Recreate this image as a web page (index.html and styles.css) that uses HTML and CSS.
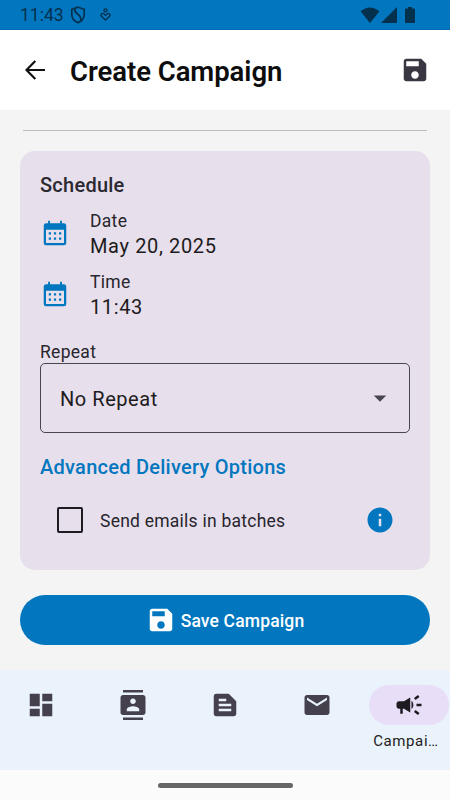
FILE: index.html
```html
<!DOCTYPE html>
<html lang="en">
<head>
<meta charset="utf-8">
<title>Create Campaign</title>
<link rel="stylesheet" href="styles.css">
</head>
<body>
<div class="screen">
  <div class="status">
    <span class="clock">11:43</span>
    <svg class="shield" viewBox="0 0 16 18" fill="none" stroke="currentColor" stroke-width="1.7"><path d="M8 1.200 14.200 3.300V8.500C14.200 12.300 11.600 15.300 8 16.600 4.400 15.300 1.800 12.300 1.800 8.500V3.300Z"/><path d="M4.800 2.800C4.300 10 11.500 6.500 10.800 14.500"/></svg>
    <svg class="heart" viewBox="0 0 11 13" fill="none" stroke="currentColor" stroke-width="1.300"><circle cx="5.500" cy="2.300" r="1.500"/><path d="M5.500 12 1.400 8.300C.3 6.900 1.700 4.900 3.500 5.500L5.500 7.300 7.500 5.500C9.300 4.900 10.700 6.900 9.600 8.300Z"/></svg>
    <span class="spacer"></span>
    <svg class="wifi" viewBox="0 0 20 16"><path fill="currentColor" d="M10 16 .5 4.300Q10-3.500 19.500 4.300Z"/></svg>
    <svg class="signal" viewBox="0 0 16 16"><path fill="currentColor" d="M0 16H16V0Z"/></svg>
    <svg class="battery" viewBox="0 0 10 16"><path fill="currentColor" d="M3 0H7V1.600H9Q10 1.600 10 2.600V15Q10 16 9 16H1Q0 16 0 15V2.600Q0 1.600 1 1.600H3Z"/></svg>
  </div>

  <header class="appbar">
    <svg class="back" viewBox="0 0 20 20" fill="none" stroke="currentColor" stroke-width="2.200"><path d="M10.300 1 1.500 10 10.300 19M1.500 10H20"/></svg>
    <h1>Create Campaign</h1>
    <svg class="icon save" viewBox="0 0 24 24"><path fill="currentColor" d="M17 3H5c-1.110 0-2 .9-2 2v14c0 1.100.89 2 2 2h14c1.100 0 2-.9 2-2V7l-4-4zm-5 16c-1.660 0-3-1.340-3-3s1.340-3 3-3 3 1.340 3 3-1.340 3-3 3zm3-10H5V5h10v4z"/></svg>
  </header>

  <main>
    <div class="divider"></div>
    <section class="card">
      <h2>Schedule</h2>
      <div class="row">
        <svg class="icon" viewBox="0 0 24 24"><path fill="currentColor" fill-rule="evenodd" d="M5 4.200H6.500V2.200H8V4.200H16V2.200H17.500V4.200H19Q21 4.200 21 6V20Q21 21.800 19.200 21.800H4.800Q3 21.800 3 20V6Q3 4.200 5 4.200ZM4.800 9.300V20H19.200V9.300ZM7 11.400H8.800V13.200H7ZM11.100 11.400H12.900V13.200H11.100ZM15.200 11.400H17V13.200H15.200ZM7 15.500H8.800V17.300H7ZM11.100 15.500H12.900V17.300H11.100ZM15.200 15.500H17V17.300H15.200Z"/></svg>
        <div><div class="label">Date</div><div class="value">May 20, 2025</div></div>
      </div>
      <div class="row">
        <svg class="icon" viewBox="0 0 24 24"><path fill="currentColor" fill-rule="evenodd" d="M5 4.200H6.500V2.200H8V4.200H16V2.200H17.500V4.200H19Q21 4.200 21 6V20Q21 21.800 19.200 21.800H4.800Q3 21.800 3 20V6Q3 4.200 5 4.200ZM4.800 9.300V20H19.200V9.300ZM7 11.400H8.800V13.200H7ZM11.100 11.400H12.900V13.200H11.100ZM15.200 11.400H17V13.200H15.200ZM7 15.500H8.800V17.300H7ZM11.100 15.500H12.900V17.300H11.100ZM15.200 15.500H17V17.300H15.200Z"/></svg>
        <div><div class="label">Time</div><div class="value">11:43</div></div>
      </div>
      <div class="label repeat">Repeat</div>
      <div class="select"><span>No Repeat</span><svg class="icon" viewBox="0 0 24 24"><path fill="currentColor" d="m7 10 5 5 5-5z"/></svg></div>
      <h3>Advanced Delivery Options</h3>
      <div class="option">
        <span class="box"></span>
        <span class="label">Send emails in batches</span>
        <svg class="icon info" viewBox="0 0 24 24"><path fill="currentColor" d="M12 2C6.480 2 2 6.480 2 12s4.480 10 10 10 10-4.480 10-10S17.520 2 12 2zm1 15h-2v-6h2v6zm0-8h-2V7h2v2z"/></svg>
      </div>
    </section>
    <div class="button">
      <svg class="icon" viewBox="0 0 24 24"><path fill="currentColor" d="M17 3H5c-1.110 0-2 .9-2 2v14c0 1.100.89 2 2 2h14c1.100 0 2-.9 2-2V7l-4-4zm-5 16c-1.660 0-3-1.340-3-3s1.340-3 3-3 3 1.340 3 3-1.340 3-3 3zm3-10H5V5h10v4z"/></svg>
      <span>Save Campaign</span>
    </div>
  </main>

  <nav>
    <div class="item"><div class="pill"><svg class="icon" viewBox="0 0 24 24"><path fill="currentColor" d="M3 13h8V3H3v10zm0 8h8v-6H3v6zm10 0h8V11h-8v10zm0-18v6h8V3h-8z"/></svg></div></div>
    <div class="item"><div class="pill"><svg class="icon" viewBox="0 0 24 24"><path fill="currentColor" d="M20 0H4v2h16V0zM4 24h16v-2H4v2zM20 4H4c-1.100 0-2 .9-2 2v12c0 1.100.9 2 2 2h16c1.100 0 2-.9 2-2V6c0-1.100-.9-2-2-2zm-8 2.750c1.240 0 2.250 1.010 2.250 2.250s-1.010 2.250-2.250 2.250S9.750 10.240 9.750 9 10.760 6.750 12 6.750zM17 17H7v-1.500c0-1.670 3.330-2.500 5-2.500s5 .83 5 2.500V17z"/></svg></div></div>
    <div class="item"><div class="pill"><svg class="icon" viewBox="0 0 24 24"><path fill="currentColor" fill-rule="evenodd" d="M15 3H5c-1.100 0-2 .9-2 2v14c0 1.100.9 2 2 2h14c1.100 0 2-.9 2-2V9l-6-6zM7 7h6v2H7zm0 4h10v2H7zm0 4h10v2H7z"/></svg></div></div>
    <div class="item"><div class="pill"><svg class="icon" viewBox="0 0 24 24"><path fill="currentColor" d="M20 4H4c-1.100 0-1.990.9-1.990 2L2 18c0 1.100.9 2 2 2h16c1.100 0 2-.9 2-2V6c0-1.100-.9-2-2-2zm0 4-8 5-8-5V6l8 5 8-5v2z"/></svg></div></div>
    <div class="item active"><div class="pill"><svg class="icon" viewBox="0 0 24 24"><path fill="currentColor" d="M18 11v2h4v-2h-4zM16 17.610c.96.71 2.210 1.650 3.200 2.390.4-.53.8-1.070 1.200-1.600-.99-.74-2.240-1.680-3.200-2.400-.4.54-.8 1.080-1.200 1.610zM20.400 5.600c-.4-.53-.8-1.070-1.200-1.600-.99.74-2.240 1.680-3.200 2.400.4.530.8 1.070 1.200 1.600.96-.72 2.210-1.650 3.200-2.400zM4 9c-1.100 0-2 .9-2 2v2c0 1.100.9 2 2 2h1v4h2v-4h1l5 3V6L8 9H4zm11.500 3c0-1.330-.58-2.530-1.500-3.350v6.690c.92-.81 1.500-2.010 1.500-3.340z"/></svg></div><div class="caption">Campai…</div></div>
  </nav>
  <div class="gesture"><div class="handle"></div></div>
</div>
</body>
</html>
```

FILE: styles.css
```css
* { box-sizing: border-box; margin: 0; padding: 0; }
body { font-family: Roboto, "Liberation Sans", sans-serif; color: #1d1b20; }
svg { display: block; flex: none; }
.screen { width: 450px; height: 800px; display: flex; flex-direction: column; background: #f4f4f4; overflow: hidden; }
.icon { width: 30px; height: 30px; }

.status { height: 30px; flex: none; background: #0277bf; color: #03304c; display: flex; align-items: center; padding: 0 34px 0 20px; border-bottom: 1px solid #0868b8; }
.clock { font-size: 17.5px; letter-spacing: 0; width: 50px; white-space: nowrap; }
.shield { width: 16px; height: 18px; }
.heart { width: 11px; height: 13px; margin-left: 14px; }
.spacer { flex: 1; }
.wifi { width: 20px; height: 16px; margin-right: 1px; }
.signal { width: 16px; height: 16px; }
.battery { width: 10px; height: 16px; margin: 0 1px 0 8px; }

.appbar { height: 80px; flex: none; background: #fff; display: flex; align-items: center; padding: 0 20px 0 25px; }
.back { width: 20px; height: 20px; color: #111; }
h1 { flex: 1; margin-left: 25px; font-size: 27.5px; font-weight: 600; letter-spacing: -.05px; line-height: 40px; color: #0d0d0d; padding-top: 3px; }
.save { color: #3a3742; }

main { flex: 1; padding: 20px 20px 25px; display: flex; flex-direction: column; }
.divider { height: 1px; margin: 0 3px 20px; background: #bdbdbd; }
.card { height: 419px; border-radius: 15px; background: #e7dfec; padding: 19px 20px; }
h2 { font-size: 20px; font-weight: 500; line-height: 30px; letter-spacing: .25px; color: #2b2830; }
.row { height: 50px; display: flex; align-items: center; gap: 20px; margin-top: 8px; }
.row + .row { margin-top: 11px; }
.row > div { padding-top: 2px; }
.row .icon, .info { color: #0277bf; }
.label { font-size: 17.5px; line-height: 25px; letter-spacing: .3px; white-space: nowrap; color: #28252c; }
.value { font-size: 20px; line-height: 25px; letter-spacing: .63px; white-space: nowrap; }
.repeat { margin-top: 21px; line-height: 23px; padding-top: 1px; height: 23px; }
.select { height: 70px; border: 1px solid #49454f; border-radius: 5px; display: flex; align-items: center; justify-content: space-between; padding: 0 14px 0 19px; font-size: 20px; letter-spacing: .55px; }
.select span { padding-top: 2px; }
.select .icon { color: #49454f; }
h3 { font-size: 20px; font-weight: 500; line-height: 30px; margin-top: 19px; letter-spacing: .26px; color: #0277bf; white-space: nowrap; }
.option { height: 50px; margin-top: 13px; display: flex; align-items: center; padding: 0 15px 0 17px; }
.box { width: 26px; height: 26px; border: 2.500px solid #1d1b20; border-radius: 2px; margin-right: 17px; }
.option .label { flex: 1; padding-top: 2px; letter-spacing: .24px; }
.button { height: 50px; margin-top: 25px; border-radius: 25px; background: #0277bf; color: #fff; display: flex; align-items: center; justify-content: center; gap: 5px; font-size: 17.5px; font-weight: 500; letter-spacing: .15px; }
.button span { padding-top: 2px; }

nav { height: 100px; flex: none; background: #eaf3fc; display: grid; grid-template-columns: repeat(5, 82px); gap: 10px; }
.item { padding-top: 15px; color: #45414c; }
.pill { width: 80px; height: 40px; margin: 0 auto; border-radius: 20px; display: flex; align-items: center; justify-content: center; }
.active { color: #1d1b20; }
.active .pill { background: #e8def8; }
.caption { margin-top: 6px; line-height: 20px; font-size: 15px; letter-spacing: .6px; text-align: center; padding-right: 6px; }
.gesture { height: 30px; flex: none; background: #fbfbfb; display: flex; align-items: center; justify-content: center; }
.handle { width: 135px; height: 5px; border-radius: 3px; background: #666; }
```
